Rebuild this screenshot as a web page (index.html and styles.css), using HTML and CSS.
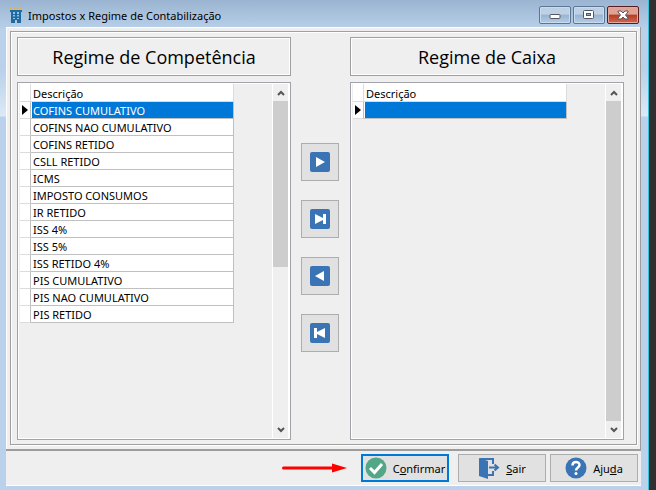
FILE: index.html
```html
<!DOCTYPE html>
<html lang="pt-BR">
<head>
    <meta charset="UTF-8">
    <meta name="viewport" content="width=device-width, initial-scale=1.0">
    <title>Impostos x Regime de Contabilização</title>
    <link rel="stylesheet" href="styles.css">
</head>
<body>

    <div class="window">
        <header class="titlebar">
            <svg class="app-icon" viewBox="0 0 12 16">
                <path d="M0 1h2M3.300 1h2M6.600 1h2M10 1h2" stroke="#e3b04b" stroke-width="2"/>
                <path d="M0 3h12v2h-1v11H7v-3H5v3H1V5H0z" fill="#1f6a9e"/>
                <path d="M3 5h2v2H3zM7 5h2v2H7zM3 8h2v1.500H3zM7 8h2v1.500H7zM3 11h2v1H3zM7 11h2v1H7z" fill="#8fc4e4"/>
            </svg>
            <h1 class="title">Impostos x Regime de Contabilização</h1>
            <div class="window-buttons">
                <button class="win-btn" aria-label="Minimizar">
                    <svg width="12" height="12"><rect x="1" y="5.500" width="10" height="4" rx="1" fill="#fff" stroke="#535666"/></svg>
                </button>
                <button class="win-btn" aria-label="Maximizar">
                    <svg width="12" height="12"><rect x=".5" y="1.500" width="10" height="8" rx="1" fill="#fff" stroke="#535666"/><rect x="3.500" y="4.500" width="4" height="2" fill="#8fb0d0" stroke="#535666"/></svg>
                </button>
                <button class="win-btn win-close" aria-label="Fechar">
                    <svg width="12" height="12"><path d="M1 2h3l2 2 2-2h3v1L8.500 6l2.500 3v1H8L6 8l-2 2H1V9l2.500-3L1 3z" fill="#fff" stroke="#535666"/></svg>
                </button>
            </div>
        </header>

        <main class="content">
            <div class="workspace">
                <section class="column">
                    <h2 class="heading">Regime de Competência</h2>
                    <div class="grid-box">
                        <table class="grid">
                            <thead>
                                <tr><th class="mark"></th><th>Descrição</th></tr>
                            </thead>
                            <tbody>
                                <tr class="selected"><td class="mark"><svg width="6" height="10"><path d="M0 0l6 5-6 5z"/></svg></td><td>COFINS CUMULATIVO</td></tr>
                                <tr><td class="mark"></td><td>COFINS NAO CUMULATIVO</td></tr>
                                <tr><td class="mark"></td><td>COFINS RETIDO</td></tr>
                                <tr><td class="mark"></td><td>CSLL RETIDO</td></tr>
                                <tr><td class="mark"></td><td>ICMS</td></tr>
                                <tr><td class="mark"></td><td>IMPOSTO CONSUMOS</td></tr>
                                <tr><td class="mark"></td><td>IR RETIDO</td></tr>
                                <tr><td class="mark"></td><td>ISS 4%</td></tr>
                                <tr><td class="mark"></td><td>ISS 5%</td></tr>
                                <tr><td class="mark"></td><td>ISS RETIDO 4%</td></tr>
                                <tr><td class="mark"></td><td>PIS CUMULATIVO</td></tr>
                                <tr><td class="mark"></td><td>PIS NAO CUMULATIVO</td></tr>
                                <tr><td class="mark"></td><td>PIS RETIDO</td></tr>
                            </tbody>
                        </table>
                        <div class="scrollbar">
                            <button class="scroll-btn" aria-label="Rolar para cima"><svg width="8" height="6"><path d="M1 5l3-3 3 3" fill="none" stroke="#555" stroke-width="2"/></svg></button>
                            <div class="track"><div class="thumb thumb-half"></div></div>
                            <button class="scroll-btn" aria-label="Rolar para baixo"><svg width="8" height="6"><path d="M1 1l3 3 3-3" fill="none" stroke="#555" stroke-width="2"/></svg></button>
                        </div>
                    </div>
                </section>

                <div class="transfer">
                    <button class="move-btn" aria-label="Mover selecionado para Caixa">
                        <svg width="20" height="20"><rect width="20" height="20" rx="2" fill="#3a74b4"/><path d="M6 5l9 5-9 5z" fill="#fff"/></svg>
                    </button>
                    <button class="move-btn" aria-label="Mover todos para Caixa">
                        <svg width="20" height="20"><rect width="20" height="20" rx="2" fill="#3a74b4"/><path d="M5 5l8 4V5h3v10h-3v-4l-8 4z" fill="#fff"/></svg>
                    </button>
                    <button class="move-btn" aria-label="Mover selecionado para Competência">
                        <svg width="20" height="20"><rect width="20" height="20" rx="2" fill="#3a74b4"/><path d="M14 5l-9 5 9 5z" fill="#fff"/></svg>
                    </button>
                    <button class="move-btn" aria-label="Mover todos para Competência">
                        <svg width="20" height="20"><rect width="20" height="20" rx="2" fill="#3a74b4"/><path d="M15 5L7 9V5H4v10h3v-4l8 4z" fill="#fff"/></svg>
                    </button>
                </div>

                <section class="column">
                    <h2 class="heading">Regime de Caixa</h2>
                    <div class="grid-box">
                        <table class="grid">
                            <thead>
                                <tr><th class="mark"></th><th>Descrição</th></tr>
                            </thead>
                            <tbody>
                                <tr class="selected"><td class="mark"><svg width="6" height="10"><path d="M0 0l6 5-6 5z"/></svg></td><td></td></tr>
                            </tbody>
                        </table>
                        <div class="scrollbar">
                            <button class="scroll-btn" aria-label="Rolar para cima"><svg width="8" height="6"><path d="M1 5l3-3 3 3" fill="none" stroke="#555" stroke-width="2"/></svg></button>
                            <div class="track"><div class="thumb"></div></div>
                            <button class="scroll-btn" aria-label="Rolar para baixo"><svg width="8" height="6"><path d="M1 1l3 3 3-3" fill="none" stroke="#555" stroke-width="2"/></svg></button>
                        </div>
                    </div>
                </section>
            </div>
        </main>

        <footer class="actions">
            <svg class="pointer" width="66" height="10"><path d="M1.500 5H51" stroke="#f00" stroke-width="3" stroke-linecap="round"/><path d="M50 .5L65 5l-15 4.500z" fill="#f00"/></svg>
            <button class="action primary">
                <svg width="22" height="22"><circle cx="11" cy="11" r="10.500" fill="#52a886"/><path d="M5 11l4.500 4.500L17 7" fill="none" stroke="#fff" stroke-width="3"/></svg>
                <span>C<u>o</u>nfirmar</span>
            </button>
            <button class="action">
                <svg width="22" height="22"><path d="M2 2h13v5M15 14v4H9" fill="none" stroke="#3a74b4" stroke-width="2"/><path d="M1 1l9 3v18l-9-3z" fill="#3a74b4"/><path d="M11 10.500h8M16.500 7.500l3.500 3-3.500 3" fill="none" stroke="#3a74b4" stroke-width="2"/></svg>
                <span><u>S</u>air</span>
            </button>
            <button class="action">
                <svg width="22" height="22"><circle cx="11" cy="11" r="10.500" fill="#3a74b4"/><path d="M7.500 8.500C7.500 4 14.500 4 14.500 8c0 2.500-3.500 2.500-3.500 5.500" fill="none" stroke="#fff" stroke-width="2.500"/><circle cx="11" cy="16.500" r="1.500" fill="#fff"/></svg>
                <span>Aju<u>d</u>a</span>
            </button>
        </footer>
    </div>

</body>
</html>
```
FILE: styles.css
```css
* {
    box-sizing: border-box;
}
body {
    margin: 0;
    height: 100vh;
    padding-right: 7px;
    background: #303030;
    font-family: "Noto Sans", "Open Sans", sans-serif;
    font-size: 11px;
    color: #000;
}
h1, h2 {
    margin: 0;
    font-weight: normal;
}
button {
    padding: 0;
    font: inherit;
    color: inherit;
}
svg {
    display: block;
    flex: none;
}
.window {
    display: flex;
    flex-direction: column;
    height: 100%;
    padding: 0 7px 4px 6px;
    border-right: 1px solid #35c3dc;
    background: linear-gradient(#9ab4d1 0, #b9d1ea 30px, #b9d1ea 70px, #dce9f6 116px, #b9d1ea 117px);
}

/* title bar */
.titlebar {
    display: flex;
    align-items: center;
    height: 27px;
    padding: 3px 2px 0 4px;
}
.app-icon {
    width: 12px;
    height: 16px;
}
.title {
    flex: 1;
    padding-left: 6px;
    font-size: 11px;
}
.window-buttons {
    display: flex;
    gap: 2px;
}
.win-btn {
    display: flex;
    align-items: center;
    justify-content: center;
    width: 32px;
    height: 18px;
    border: 1px solid #5b7795;
    border-radius: 2px;
    box-shadow: inset 0 0 0 1px #c9dbee;
    background: linear-gradient(#bdd0e4 45%, #98b4d1 50%, #b5cce4);
}
.win-close {
    border-color: #571c22;
    box-shadow: inset 0 0 0 1px #e3a79c;
    background: linear-gradient(#dfa294 45%, #b83a24 50%, #cd6a50);
}

/* main area */
.content {
    display: flex;
    flex: 1;
    min-height: 0;
    padding: 4px 3px 4px 4px;
    border: solid #9c9c9c;
    border-width: 0 1px 2px 0;
    background: #efefef;
    box-shadow: inset 1px 1px 0 #fff;
}
.workspace {
    display: grid;
    grid-template-columns: 1fr 59px 1fr;
    flex: 1;
    padding: 5px 12px 4px 6px;
    border: 1px solid #a0a0a0;
    box-shadow: inset 1px 1px 0 #fff, 1px 1px 0 #fff;
}
.column {
    display: flex;
    flex-direction: column;
    gap: 6px;
    min-height: 0;
}
.heading {
    height: 39px;
    border: 1px solid #a0a0a0;
    box-shadow: inset 0 0 0 1px #fff;
    font-family: "Open Sans", "Noto Sans", sans-serif;
    font-size: 18px;
    line-height: 38px;
    text-align: center;
}
.grid-box {
    display: flex;
    flex: 1;
    justify-content: space-between;
    align-items: flex-start;
    min-height: 0;
    padding: 1px 1px 1px 2px;
    border: 1px solid #a2a2aa;
    box-shadow: inset 0 0 0 1px #fff;
}

/* data grid */
.grid {
    width: 214px;
    table-layout: fixed;
    border-collapse: separate;
    border-spacing: 0;
    background: #fff;
}
.grid th, .grid td {
    height: 17px;
    padding: 2px 0 0 2px;
    border: solid #c0c0c0;
    border-width: 0 1px 1px 0;
    background-clip: padding-box;
    font-weight: normal;
    line-height: 14px;
    text-align: left;
    white-space: nowrap;
}
.grid th {
    height: 18px;
    border-color: #dcdcdc;
}
.grid .mark {
    width: 11px;
    padding: 0 0 0 2px;
    border-bottom-color: #dcdcdc;
}
.selected td + td {
    background-color: #0078d7;
    box-shadow: inset 1px 0 0 #fff;
    color: #fff;
}

/* scrollbar */
.scrollbar {
    display: flex;
    flex-direction: column;
    align-self: stretch;
    width: 17px;
    border: solid #fff;
    border-width: 0 1px;
}
.scroll-btn {
    display: flex;
    align-items: center;
    justify-content: center;
    height: 17px;
    border: none;
    background: #efefef;
}
.track {
    flex: 1;
}
.thumb {
    height: 100%;
    background: #cdcdcd;
}
.thumb-half {
    height: 52%;
}

/* transfer buttons */
.transfer {
    display: flex;
    flex-direction: column;
    gap: 19px;
    padding: 106px 0 0 10px;
}
.move-btn {
    display: flex;
    align-items: center;
    justify-content: center;
    width: 38px;
    height: 38px;
    border: 1px solid #adadad;
    background: #e1e1e1;
}

/* footer */
.actions {
    display: flex;
    justify-content: flex-end;
    align-items: center;
    gap: 4px;
    height: 35px;
    padding-right: 3px;
    border-bottom: 1px solid #fff;
    background: #efefef;
}
.action {
    display: flex;
    align-items: center;
    justify-content: center;
    gap: 6px;
    width: 88px;
    height: 28px;
    border: 1px solid #adadad;
    background: #e1e1e1;
}
.primary {
    margin-right: 5px;
    border: 2px solid #0078d7;
}
.pointer {
    margin-right: 9px;
}
```
